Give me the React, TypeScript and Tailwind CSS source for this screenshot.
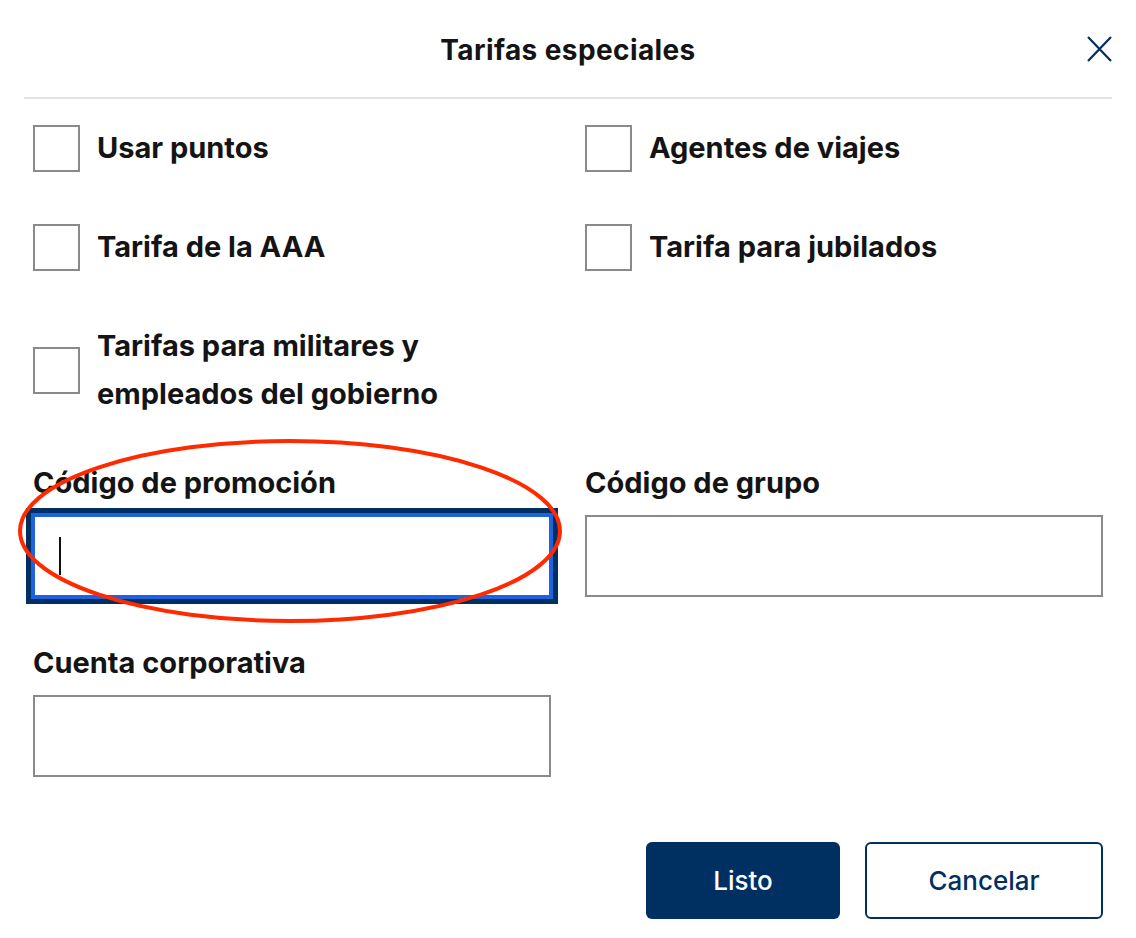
import { useState } from "react";

const checkboxes = [
  "Usar puntos",
  "Agentes de viajes",
  "Tarifa de la AAA",
  "Tarifa para jubilados",
  "Tarifas para militares y empleados del gobierno",
];

function Checkbox({ label }: { label: string }) {
  const [checked, setChecked] = useState(false);
  return (
    <label className="flex items-center gap-[17px] cursor-pointer">
      <span
        onClick={() => setChecked(!checked)}
        className={`w-[47px] h-[47px] shrink-0 border-2 border-[#8a8a8a] ${
          checked ? "bg-[#002f61]" : "bg-white"
        }`}
      />
      <span className="max-w-[380px] text-[29px] leading-[48px] font-bold text-[#141414]">
        {label}
      </span>
    </label>
  );
}

function Field({ label, focused }: { label: string; focused?: boolean }) {
  return (
    <div className="flex flex-col">
      <span className="text-[29px] leading-[36px] font-bold text-[#141414] mb-[14px]">
        {label}
      </span>
      {focused ? (
        <div className="h-[82px] border-2 border-[#1f62e0] shadow-[0_0_0_2px_#1f62e0,0_0_0_7px_#002f61] flex items-center pl-[24px]">
          <span className="w-[2px] h-[38px] bg-[#111]" />
        </div>
      ) : (
        <input className="h-[82px] w-full border-2 border-[#8a8a8a] px-6 text-[26px] outline-none" />
      )}
    </div>
  );
}

export default function App() {
  return (
    <div className="relative min-h-screen bg-white font-['Inter','Noto_Sans',sans-serif]">
      {/* Header */}
      <div className="px-6">
        <div className="h-[97px] flex items-center justify-between">
          <span className="w-[25px]" />
          <h1 className="text-[28px] font-bold tracking-[0.4px] text-[#141414] pt-[2px]">
            Tarifas especiales
          </h1>
          <button className="w-[25px] h-[26px] text-[#002f61]">
            <svg viewBox="0 0 25 26" width="25" height="26" fill="none">
              <path
                d="M1 1L24 25M24 1L1 25"
                stroke="currentColor"
                strokeWidth="2.2"
              />
            </svg>
          </button>
        </div>
        <div className="h-[2px] bg-[#e2e2e2]" />
      </div>

      <div className="px-[33px] pt-[25px]">
        {/* Options */}
        <div className="grid grid-cols-2 gap-x-[34px] gap-y-[51px]">
          {checkboxes.map((c) => (
            <Checkbox key={c} label={c} />
          ))}
        </div>

        {/* Codes */}
        <div className="grid grid-cols-2 gap-x-[34px] gap-y-[48px] mt-[47px]">
          <Field label="Código de promoción" focused />
          <Field label="Código de grupo" />
          <Field label="Cuenta corporativa" />
        </div>

        {/* Actions */}
        <div className="flex justify-end gap-[25px] mt-[65px]">
          <button className="w-[194px] h-[77px] rounded-[6px] bg-[#002f61] text-white text-[26px] font-medium">
            Listo
          </button>
          <button className="w-[238px] h-[77px] rounded-[6px] border-2 border-[#002f61] bg-white text-[#002f61] text-[26px] font-medium">
            Cancelar
          </button>
        </div>
      </div>

      {/* Annotation */}
      <svg
        className="absolute left-[17px] top-[438px] pointer-events-none"
        width="546"
        height="187"
        viewBox="0 0 546 187"
        fill="none"
      >
        <ellipse
          cx="273"
          cy="93"
          rx="270"
          ry="90"
          stroke="#ff2a00"
          strokeWidth="4"
        />
      </svg>
    </div>
  );
}
